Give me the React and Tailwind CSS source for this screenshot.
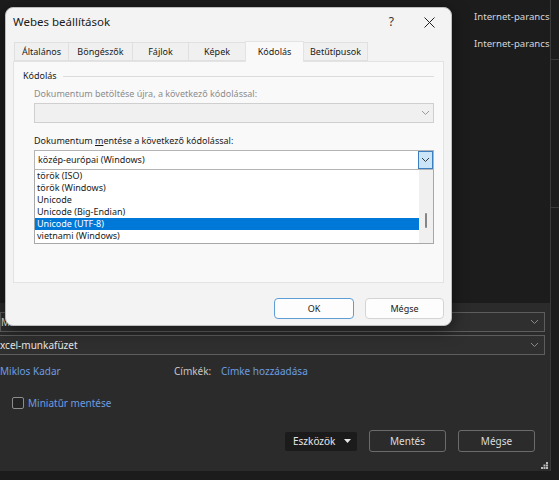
import React from "react";

const tabs = ["Általános", "Böngészők", "Fájlok", "Képek", "Kódolás", "Betűtípusok"];
const tabWidths = ["w-[55px]", "w-[65px]", "w-[57px]", "w-[58px]", "w-[59px]", "w-[65px]"];
const items = ["török (ISO)", "török (Windows)", "Unicode", "Unicode (Big-Endian)", "Unicode (UTF-8)", "vietnami (Windows)"];

function Chevron({ className }) {
    return (
        <svg width="9" height="6" viewBox="0 0 9 6" className={className}>
            <path d="M1 1 L4.5 4.5 L8 1" fill="none" stroke="currentColor" strokeWidth="1" />
        </svg>
    );
}

function Dialog() {
    return (
        <div className="absolute left-[5px] top-[7px] w-[447px] h-[319px] rounded-[8px] bg-[#f3f3f3] border border-[#bdbdbd] shadow-[0_4px_16px_rgba(0,0,0,0.5)] flex flex-col text-[#1a1a1a] text-[9px] leading-[12px]">
            {/* title bar */}
            <div className="h-[27px] flex items-center justify-between pl-[7px] pr-[16px] pt-[1px]">
                <span className="text-[11.5px] leading-[14px]">Webes beállítások</span>
                <div className="flex items-center gap-[30px]">
                    <span className="text-[12px] leading-[14px] text-[#333]">?</span>
                    <svg width="11" height="11" viewBox="0 0 11 11">
                        <path d="M0.5 0.5 L10.5 10.5 M10.5 0.5 L0.5 10.5" stroke="#222" strokeWidth="1" />
                    </svg>
                </div>
            </div>

            {/* tabs */}
            <div className="flex items-end pl-[8px] h-[26px]">
                {tabs.map((t, i) =>
                    t === "Kódolás" ? (
                        <div key={t} className={tabWidths[i] + " h-[21px] bg-[#f9f9f9] border border-b-0 border-[#e3e3e3] -ml-px flex items-center justify-center relative top-[1px] z-10"}>
                            {t}
                        </div>
                    ) : (
                        <div key={t} className={tabWidths[i] + " h-[19px] bg-[#f0f0f0] border border-[#e0e0e0] -ml-px first:ml-0 flex items-center justify-center"}>
                            {t}
                        </div>
                    )
                )}
            </div>

            {/* panel */}
            <div className="mx-[7px] h-[222px] bg-[#f9f9f9] border border-[#e3e3e3] px-[9px] pt-[8px]">
                <div className="flex items-center gap-[6px]">
                    <span>Kódolás</span>
                    <div className="flex-1 h-px bg-[#dcdcdc]"></div>
                </div>
                <div className="pl-[11px]">
                    <div className="mt-[6px] text-[#8c8c8c]">Dokumentum betöltése újra, a következő kódolással:</div>
                    <div className="mt-[3px] h-[20px] bg-[#f0f0f0] border border-[#cfcfcf] flex justify-end">
                        <div className="w-[16px] h-full flex items-center justify-center text-[#9a9a9a]">
                            <Chevron />
                        </div>
                    </div>
                    <div className="mt-[12px]">
                        Dokumentum <span className="underline">m</span>entése a következő kódolással:
                    </div>
                    <div className="mt-[3px] h-[20px] bg-white border border-[#b5b5b5] flex items-center">
                        <span className="pl-[3px] flex-1">közép-európai (Windows)</span>
                        <div className="w-[15px] h-[18px] bg-[#cce4f7] border border-[#3c7fc1] flex items-center justify-center text-[#3a3a3a]">
                            <Chevron />
                        </div>
                    </div>
                    <div className="h-[74px] bg-white border border-t-0 border-[#a8a8a8] flex">
                        <div className="flex-1">
                            {items.map((it) => (
                                <div
                                    key={it}
                                    className={
                                        it === "Unicode (UTF-8)"
                                            ? "h-[12px] pl-[2px] bg-[#0078d7] text-white"
                                            : "h-[12px] pl-[2px]"
                                    }
                                >
                                    {it}
                                </div>
                            ))}
                        </div>
                        <div className="w-[14px] bg-[#f0f0f0] flex justify-center">
                            <div className="mt-[43px] w-[2px] h-[15px] bg-[#868686] rounded-full"></div>
                        </div>
                    </div>
                </div>
            </div>

            {/* buttons */}
            <div className="flex justify-end gap-[11px] pr-[7px] mt-[15px]">
                <button className="w-[80px] h-[21px] rounded-[4px] bg-[#fdfdfd] border border-[#5e9ed6]">OK</button>
                <button className="w-[79px] h-[21px] rounded-[4px] bg-[#fdfdfd] border border-[#d4d4d4]">Mégse</button>
            </div>
        </div>
    );
}

function App() {
    return (
        <div className="w-[559px] h-[480px] bg-[#1c1c1c] relative overflow-hidden font-['Noto_Sans',sans-serif]">
            {/* background window */}
            <div className="flex flex-col h-full">
                <div className="h-[303px] flex">
                    <div className="flex-1"></div>
                    <div className="w-[81px] pl-[4px] pt-[10px] border-r border-[#3a3a3a] text-[9.6px] leading-[14px] text-[#d6d6d6] whitespace-nowrap">
                        <div>Internet-parancs</div>
                        <div className="mt-[13px]">Internet-parancs</div>
                    </div>
                    <div className="w-[8px] flex flex-col">
                        <div className="h-[60px] border-b border-[#3a3a3a]"></div>
                        <div className="h-[148px] border-b border-[#3a3a3a]"></div>
                    </div>
                </div>
                <div className="h-[168px] w-[551px] bg-[#2b2b2b] border-r border-[#3a3a3a] relative text-[10px] leading-[14px]">
                    <div className="pt-[9px] pr-[5px] flex flex-col gap-[3px]">
                        <div className="h-[20px] bg-[#2f2f2f] border border-[#5d5d5d] flex items-center justify-between">
                            <span className="text-[#e6e6e6]">Mi</span>
                            <Chevron className="mr-[5px] text-[#8a8a8a]" />
                        </div>
                        <div className="h-[20px] bg-[#2f2f2f] border border-[#5d5d5d] border-l-0 flex items-center justify-between">
                            <span className="text-[#e6e6e6]">xcel-munkafüzet</span>
                            <Chevron className="mr-[5px] text-[#8a8a8a]" />
                        </div>
                    </div>
                    <div className="flex items-center mt-[8px] h-[16px]">
                        <span className="w-[174px] text-[#6c9de0]">Miklos Kadar</span>
                        <span className="text-[#c6c6c6] w-[47px]">Címkék:</span>
                        <span className="text-[#6c9de0]">Címke hozzáadása</span>
                    </div>
                    <div className="flex items-center mt-[17px] pl-[12px] gap-[4px]">
                        <div className="w-[12px] h-[12px] rounded-[2px] border border-[#8d8d8d] bg-[#232323]"></div>
                        <span className="text-[#6c9de0]">Miniatűr mentése</span>
                    </div>
                    <div className="flex justify-end items-center gap-[12px] pr-[15px] mt-[20px]">
                        <div className="w-[72px] h-[19px] bg-[#1b1b1b] rounded-[2px] flex items-center justify-between pl-[8px] pr-[6px] text-[#e6e6e6]">
                            <span>Eszközök</span>
                            <svg width="7" height="4" viewBox="0 0 7 4"><path d="M0 0 H7 L3.5 4 Z" fill="#e6e6e6" /></svg>
                        </div>
                        <button className="w-[77px] h-[22px] rounded-[3px] border border-[#6b6b6b] text-[#dcdcdc]">Mentés</button>
                        <button className="w-[77px] h-[22px] rounded-[3px] border border-[#6b6b6b] text-[#dcdcdc]">Mégse</button>
                    </div>
                    <svg className="absolute right-[2px] bottom-[2px]" width="7" height="7" viewBox="0 0 7 7">
                        <rect x="5" y="0" width="2" height="2" fill="#bbb" />
                        <rect x="2.5" y="2.5" width="2" height="2" fill="#bbb" />
                        <rect x="5" y="2.5" width="2" height="2" fill="#bbb" />
                        <rect x="0" y="5" width="2" height="2" fill="#bbb" />
                        <rect x="2.5" y="5" width="2" height="2" fill="#bbb" />
                        <rect x="5" y="5" width="2" height="2" fill="#bbb" />
                    </svg>
                </div>
                <div className="flex-1"></div>
            </div>
            <Dialog />
        </div>
    );
}

export default App;
